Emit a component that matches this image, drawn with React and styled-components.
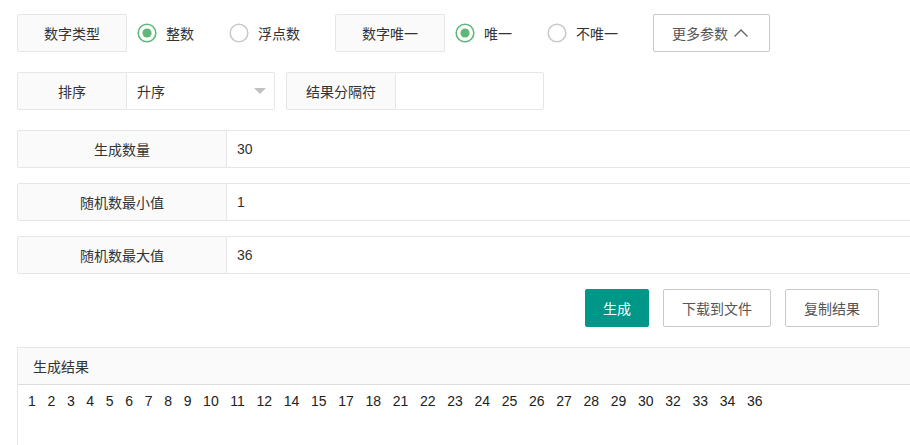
import React from "react";
import styled, { createGlobalStyle } from "styled-components";

const Global = createGlobalStyle`
  html, body { margin: 0; padding: 0; background: #fff; overflow: hidden; }
  body {
    font-family: "Liberation Sans", "Noto Sans CJK SC", sans-serif;
    font-size: 14px;
    color: #333;
  }
  * { box-sizing: border-box; }
`;

const Page = styled.div`
  width: 1200px;
  padding: 14px 0 0 17px;
  display: flex;
  flex-direction: column;
`;

const Row = styled.div`
  display: flex;
  align-items: center;
  height: 38px;
  margin-bottom: ${(p) => p.$mb || 0}px;
`;

const Label = styled.div`
  flex: none;
  width: ${(p) => p.$w || 110}px;
  height: 38px;
  display: flex;
  align-items: center;
  justify-content: center;
  background: #fafafa;
  border: 1px solid #e6e6e6;
  border-radius: 2px 0 0 2px;
  color: #333;
  white-space: nowrap;
`;

const RadioGroup = styled.div`
  display: flex;
  align-items: center;
  padding-left: 10px;
`;

const RadioItem = styled.label`
  display: flex;
  align-items: center;
  gap: 9px;
  margin-right: 35px;
  color: #333;
  cursor: pointer;
  white-space: nowrap;
`;

const Field = styled.div`
  flex: ${(p) => (p.$w ? "none" : "1")};
  width: ${(p) => (p.$w ? `${p.$w}px` : "auto")};
  height: 38px;
  display: flex;
  align-items: center;
  justify-content: space-between;
  padding: 0 10px;
  border: 1px solid #e6e6e6;
  border-left: none;
  border-radius: 0 2px 2px 0;
  background: #fff;
  color: #333;
  margin-right: ${(p) => p.$mr || 0}px;
`;

const Caret = styled.span`
  width: 0;
  height: 0;
  margin-right: -2px;
  border-left: 6px solid transparent;
  border-right: 6px solid transparent;
  border-top: 6px solid #c2c2c2;
`;

const Button = styled.button`
  height: 38px;
  padding: 0 18px;
  display: inline-flex;
  align-items: center;
  font-family: inherit;
  font-size: 14px;
  border-radius: 2px;
  cursor: pointer;
  white-space: nowrap;
  background: ${(p) => (p.$primary ? "#009688" : "#fff")};
  color: ${(p) => (p.$primary ? "#fff" : "#555")};
  border: ${(p) => (p.$primary ? "none" : "1px solid #c9c9c9")};
`;

const MoreIcon = styled.svg`
  margin-left: 5px;
  margin-right: 2px;
`;

const ButtonBar = styled.div`
  width: 862px;
  display: flex;
  justify-content: flex-end;
  gap: 14px;
  margin-bottom: 20px;
`;

const Panel = styled.div`
  border: 1px solid #e6e6e6;
  border-right: none;
  height: 120px;
`;

const PanelHead = styled.div`
  height: 37px;
  display: flex;
  align-items: center;
  padding-left: 15px;
  background: #fafafa;
  border-bottom: 1px solid #ddd;
  color: #333;
`;

const PanelBody = styled.div`
  padding: 6px 10px;
  line-height: 20px;
  white-space: pre;
  color: #222;
`;

function Radio({ checked, children }) {
  return (
    <RadioItem>
      <svg width="20" height="20" viewBox="0 0 20 20">
        <circle
          cx="10"
          cy="10"
          r="8.8"
          fill="#fff"
          stroke={checked ? "#5FB878" : "#c9c9c9"}
          strokeWidth="1.6"
        />
        {checked && <circle cx="10" cy="10" r="4.6" fill="#5FB878" />}
      </svg>
      {children}
    </RadioItem>
  );
}

const numbers = [1, 2, 3, 4, 5, 6, 7, 8, 9, 10, 11, 12, 14, 15, 17, 18, 21, 22, 23, 24, 25, 26, 27, 28, 29, 30, 32, 33, 34, 36];

export default function App() {
  return (
    <>
      <Global />
      <Page>
        <Row $mb={20}>
          <Label>数字类型</Label>
          <RadioGroup>
            <Radio checked>整数</Radio>
            <Radio>浮点数</Radio>
          </RadioGroup>
          <Label>数字唯一</Label>
          <RadioGroup>
            <Radio checked>唯一</Radio>
            <Radio>不唯一</Radio>
          </RadioGroup>
          <Button>
            更多参数
            <MoreIcon width="16" height="10" viewBox="0 0 16 10">
              <path d="M1.5 8.5 L8 2 L14.5 8.5" fill="none" stroke="#666" strokeWidth="1.4" />
            </MoreIcon>
          </Button>
        </Row>
        <Row $mb={20}>
          <Label>排序</Label>
          <Field $w={148} $mr={11}>
            升序
            <Caret />
          </Field>
          <Label>结果分隔符</Label>
          <Field $w={148} />
        </Row>
        <Row $mb={15}>
          <Label $w={210}>生成数量</Label>
          <Field>30</Field>
        </Row>
        <Row $mb={15}>
          <Label $w={210}>随机数最小值</Label>
          <Field>1</Field>
        </Row>
        <Row $mb={15}>
          <Label $w={210}>随机数最大值</Label>
          <Field>36</Field>
        </Row>
        <ButtonBar>
          <Button $primary>生成</Button>
          <Button>下载到文件</Button>
          <Button>复制结果</Button>
        </ButtonBar>
        <Panel>
          <PanelHead>生成结果</PanelHead>
          <PanelBody>{numbers.join("   ")}</PanelBody>
        </Panel>
      </Page>
    </>
  );
}
